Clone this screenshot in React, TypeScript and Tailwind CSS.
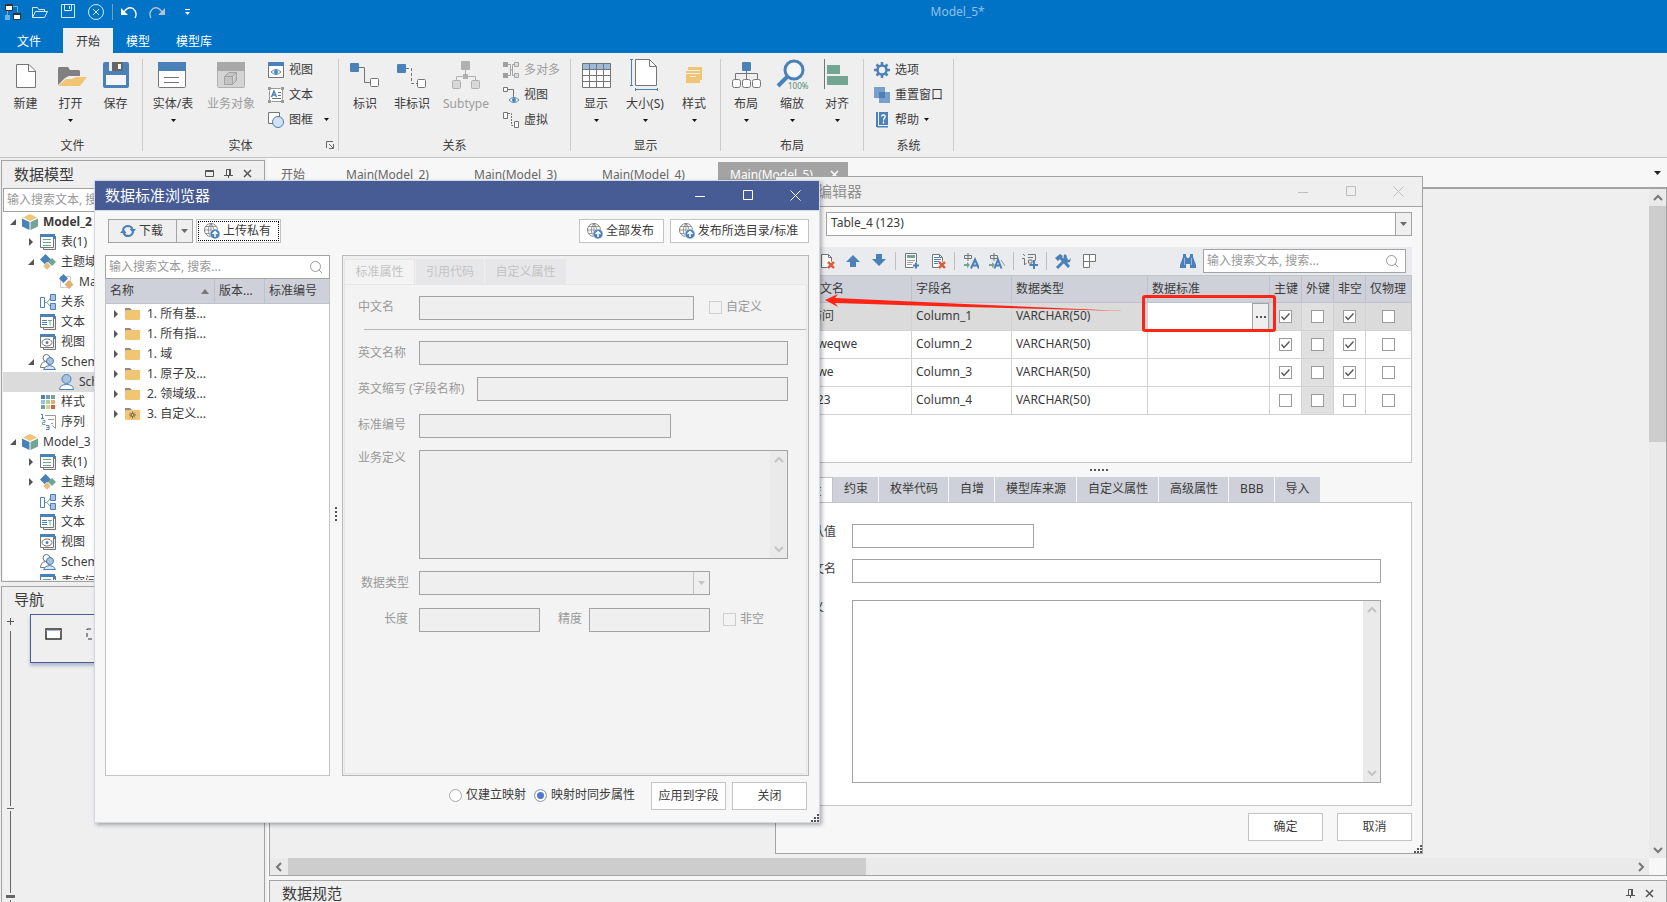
import type { ReactNode } from 'react';

const BLUE = '#4a81b9';
const GREEN = '#72a592';
const YELLOW = '#f0c573';
const GRAY = '#757575';

// ─── Icons ────────────────────────────────────────────────────────────────────

function Svg({ w = 16, h = 16, children }: { w?: number; h?: number; children: ReactNode }) {
  return (
    <svg width={w} height={h} viewBox={`0 0 ${w} ${h}`} fill="none" className="shrink-0" aria-hidden="true">
      {children}
    </svg>
  );
}

const DownArrow = () => (
  <Svg w={5} h={3}>
    <path d="M0 0h5L2.500 3z" fill="#111" />
  </Svg>
);

const Triangle = ({ color = '#6b6b6b' }: { color?: string }) => (
  <Svg w={7} h={4}>
    <path d="M0 0h7L3.500 4z" fill={color} />
  </Svg>
);

const bigIcons = {
  create: (
    <Svg w={32} h={32}>
      <path d="M6.500 5.500h12.500l6.500 6.500v16.500h-19z" fill="#fff" stroke={GRAY} />
      <path d="M18.500 5.500v7h7" stroke={GRAY} />
    </Svg>
  ),
  open: (
    <Svg w={32} h={32}>
      <path d="M3 9l1-1h9l2 3h9l1 1v5H14l-4 2-7 7z" fill="#808080" />
      <path d="M3 27l8-7h6l4-2h11l-7 9z" fill={YELLOW} />
    </Svg>
  ),
  save: (
    <Svg w={32} h={32}>
      <rect x="3" y="3" width="26" height="26" rx="2" fill={BLUE} />
      <path d="M9 3h14v9H9z" fill="#efefef" />
      <path d="M12 3h11v9H12z" fill="#666" />
      <path d="M18 5h3v5h-3zM6 16h20v10H6z" fill="#f5f5f5" />
    </Svg>
  ),
  entity: (
    <Svg w={32} h={32}>
      <rect x="1.500" y="3.500" width="27" height="25" rx="1" fill="#fff" stroke={GRAY} />
      <path d="M1 3h28v9H1z" fill={BLUE} />
      <path d="M7 18.500h15M7 23.500h15" stroke={GRAY} />
    </Svg>
  ),
  business: (
    <Svg w={32} h={32}>
      <rect x="2.500" y="3.500" width="27" height="25" rx="1" fill="#d4d4d4" stroke="#b0b0b0" />
      <path d="M2 3h28v9H2z" fill="#a8a8a8" />
      <path d="M9.500 17.500h8v8h-8zM9.500 17.500l4-4h8l-4 4M21.500 13.500v8l-4 4" fill="#c4c4c4" stroke="#a3a3a3" />
    </Svg>
  ),
  identify: (
    <Svg w={32} h={32}>
      <path d="M10 8.500h5.500v15H21" stroke={GRAY} />
      <rect x="1" y="4" width="9" height="9" rx="1" fill={BLUE} />
      <rect x="21.500" y="19.500" width="8" height="8" rx="1" fill="#fff" stroke={GRAY} />
    </Svg>
  ),
  nonIdentify: (
    <Svg w={32} h={32}>
      <path d="M10 9.500h5.500v15H21" stroke={GRAY} strokeDasharray="3 2" />
      <rect x="1" y="5" width="9" height="9" rx="1" fill={BLUE} />
      <rect x="21.500" y="20.500" width="8" height="8" rx="1" fill="#fff" stroke={GRAY} />
    </Svg>
  ),
  subtype: (
    <Svg w={32} h={32}>
      <path d="M15.500 10v8M6.500 21v-3.500h19V21" stroke="#b0b0b0" />
      <rect x="11" y="2" width="9" height="9" rx="1" fill="#b0b0b0" />
      <path d="M13 15h5v5h-5z" fill="#b0b0b0" />
      <rect x="2.500" y="21.500" width="8" height="8" rx="1" fill="#d8d8d8" stroke="#b0b0b0" />
      <rect x="21.500" y="21.500" width="8" height="8" rx="1" fill="#d8d8d8" stroke="#b0b0b0" />
    </Svg>
  ),
  display: (
    <Svg w={32} h={32}>
      <path d="M2 4h29v25H2z" fill="#fff" />
      <path d="M2 4h29v7H2z" fill="#9fb9d9" />
      <path d="M2.500 4.500h28v24h-28zM9.500 4.500v24M16.500 4.500v24M23.500 4.500v24M2.500 10.500h28M2.500 16.500h28M2.500 22.500h28" stroke={GRAY} />
    </Svg>
  ),
  size: (
    <Svg w={32} h={32}>
      <path d="M2.500.5v26M1 .5h3M1 26.500h3M6.500 30.500h22M6.500 29v3M28.500 29v3" stroke={BLUE} />
      <path d="M6.500.5h14l7 7v19h-21z" fill="#fff" stroke={GRAY} />
      <path d="M20.500.5v7h7" stroke={GRAY} />
    </Svg>
  ),
  style: (
    <Svg w={32} h={32}>
      <path d="M10 8h14v13h-2V11H10z" fill={YELLOW} />
      <path d="M8 12h14v2H8zM8 15h14v9H8z" fill={YELLOW} />
      <path d="M12.500 17.500h5" stroke="#fff" />
    </Svg>
  ),
  layout: (
    <Svg w={32} h={32}>
      <path d="M16.500 12v8M5.500 20v-5.500h22V20" stroke={GRAY} />
      <rect x="12" y="3" width="9" height="9" rx="1" fill={BLUE} />
      <rect x="2.500" y="20.500" width="8" height="8" rx="2" fill="#fff" stroke={GRAY} />
      <rect x="12.500" y="20.500" width="8" height="8" rx="2" fill="#fff" stroke={GRAY} />
      <rect x="22.500" y="20.500" width="8" height="8" rx="2" fill="#fff" stroke={GRAY} />
    </Svg>
  ),
  zoom: (
    <Svg w={34} h={32}>
      <circle cx="19" cy="11" r="9" fill="#f4f6f8" stroke={BLUE} strokeWidth="3" />
      <path d="M13 17L3 27" stroke={BLUE} strokeWidth="4" />
      <text x="13" y="30" fontSize="8" fill="#4f8a73">100%</text>
    </Svg>
  ),
  align: (
    <Svg w={32} h={32}>
      <path d="M3.500 0v30" stroke={GRAY} />
      <path d="M6 6h13v9H6zM6 17h21v9H6z" fill={GREEN} />
    </Svg>
  ),
};

const Eye = () => (
  <g>
    <path d="M3 10q5-5 10 0q-5 5-10 0z" fill="#fff" stroke={BLUE} />
    <circle cx="8" cy="10" r="2" fill={BLUE} />
  </g>
);

const ListCard = ({ children }: { children: ReactNode }) => (
  <Svg>
    <path d="M3.500 4.500h12v11h-12z" fill="#efefef" stroke={GRAY} />
    <path d="M.5 2.500h13v11H.5z" fill="#fff" stroke={GRAY} />
    <path d="M0 0h15v3H0zM14 2h2v3h-2z" fill={BLUE} />
    {children}
  </Svg>
);

const GlobeUp = () => (
  <Svg>
    <circle cx="7" cy="7" r="6.500" stroke="#808080" />
    <path d="M.5 7h13M7 .5v13M2 3.500h10M2 10.500h8M7 .5Q1.500 7 7 13.500M7 .5Q12.500 7 7 13.500" stroke="#808080" strokeWidth=".8" />
    <circle cx="11" cy="11" r="5" fill={BLUE} stroke="#fff" strokeWidth=".6" />
    <path d="M11 14V9M8.500 11L11 8.500l2.500 2.500" stroke="#fff" strokeWidth="1.500" />
  </Svg>
);

const RedX = ({ children }: { children?: ReactNode }) => (
  <Svg>
    <path d="M2.500 1.500h7l3 3v10h-10z" fill="#fff" stroke={GRAY} />
    <path d="M9.500 1.500v3h3" stroke={GRAY} />
    {children}
    <path d="M9 9l6 6M15 9l-6 6" stroke="#fff" strokeWidth="4" />
    <path d="M9 9l6 6M15 9l-6 6" stroke="#d9603f" strokeWidth="2.500" />
  </Svg>
);

const smallIcons = {
  view: (
    <Svg>
      <path d="M.5.5h15v15H.5z" fill="#fff" stroke={GRAY} />
      <path d="M0 0h16v4H0z" fill={BLUE} />
      <Eye />
    </Svg>
  ),
  text: (
    <Svg>
      <path d="M1.500 1.500h13v13h-13z" fill="#fff" stroke="#999" strokeDasharray="11 2" />
      <path d="M0 0h3v3H0zM13 0h3v3h-3zM0 13h3v3H0zM13 13h3v3h-3z" fill="#999" />
      <path d="M3.500 10L6 4l2.500 6M4.500 8h3" stroke={BLUE} strokeWidth="1.400" />
      <path d="M10 5.500h3M10 8.500h3M4 11.500h9" stroke={GRAY} />
    </Svg>
  ),
  frame: (
    <Svg>
      <path d="M.5.5h11v11H.5z" fill="#fff" stroke={GRAY} />
      <circle cx="10" cy="10" r="5.500" fill="#d5e1ef" stroke={BLUE} />
    </Svg>
  ),
  many: (
    <Svg>
      <path d="M4 2.500h3.500v11H4M12 2.500H9.500v11H12M7.500 8h2" stroke="#a5a5a5" />
      <path d="M0 0h5v5H0zM0 11h5v5H0z" fill="#a0a0a0" />
      <path d="M11.500.5h4v4h-4zM11.500 11.500h4v4h-4z" fill="#ddd" stroke="#a5a5a5" />
    </Svg>
  ),
  relView: (
    <Svg>
      <path d="M4 2.500h6.500V10" stroke={GRAY} />
      <path d="M.5.500h4v4h-4z" fill="#fff" stroke={GRAY} />
      <path d="M6 13q5-5 10 0q-5 5-10 0z" fill="#fff" stroke={BLUE} />
      <circle cx="11" cy="13" r="2" fill={BLUE} />
    </Svg>
  ),
  virtual: (
    <Svg>
      <path d="M5 1.500h3.500v12H11" stroke={GRAY} strokeDasharray="2 1" />
      <path d="M.5.500h4v6h-4zM11.500 9.500h4v6h-4z" fill="#fff" stroke={GRAY} />
    </Svg>
  ),
  gear: (
    <Svg>
      <circle cx="8" cy="8" r="4.500" stroke={BLUE} strokeWidth="2.500" />
      <path d="M8 0v3M8 13v3M0 8h3M13 8h3M2.500 2.500l2 2M11.500 11.500l2 2M13.500 2.500l-2 2M4.500 11.500l-2 2" stroke={BLUE} strokeWidth="2.500" />
    </Svg>
  ),
  windows: (
    <Svg>
      <path d="M0 0h11v11H0z" fill="#7a9fca" />
      <path d="M5 5h11v11H5z" fill="#7a9fca" />
      <path d="M5 5h6v6H5z" fill={BLUE} />
    </Svg>
  ),
  help: (
    <Svg>
      <path d="M2 0h2v15H2zM5 0h9v13H5zM3 14h11v1.500H3z" fill={BLUE} />
      <path d="M7.500 4.500Q8 2.500 10 3q2 1 .5 3Q9.500 7 9.500 8.500M9.500 9.500v2" stroke="#fff" strokeWidth="1.400" />
    </Svg>
  ),
};

const treeIcons = {
  model: (
    <Svg>
      <path d="M8 0l7 3.500L8 7 1 3.500z" fill={YELLOW} />
      <path d="M0 4.500l7.500 3.500v8L0 12.500z" fill={BLUE} />
      <path d="M16 4.500L8.500 8v8l7.500-3.500z" fill={GREEN} />
    </Svg>
  ),
  table: (
    <ListCard>
      <path d="M3 5.500h8M3 8.500h8M3 11.500h8" stroke={GREEN} />
    </ListCard>
  ),
  subject: (
    <Svg>
      <path d="M5.500 0L11 5.500 5.500 11 0 5.500z" fill={BLUE} />
      <path d="M12 4l4 4-4 4-4-4z" fill={GREEN} />
      <path d="M7 8l4 4-4 4-4-4z" fill="#e6bd80" stroke="#fff" strokeWidth=".5" />
    </Svg>
  ),
  main: (
    <Svg>
      <path d="M1.500 2.500h10v11h-10z" fill="#fff" stroke="#ccc" />
      <path d="M4.500 0L9 4.500 4.500 9 0 4.500z" fill={BLUE} />
      <path d="M10 6l4.500 4.500L10 15l-4.500-4.500z" fill="#e0b070" />
    </Svg>
  ),
  relation: (
    <Svg>
      <path d="M.5 3.500h4v10h-4z" fill="#fff" stroke={BLUE} />
      <path d="M5 8.500h2l4-5M7 8.500l4 5" stroke={GREEN} />
      <path d="M10.500.5h5v6h-5zM10.500 9.500h5v6h-5z" fill="#a9c2df" stroke={BLUE} />
    </Svg>
  ),
  text: (
    <ListCard>
      <path d="M2 6.500h5M2 8.500h5M2 10.500h5" stroke={BLUE} />
      <path d="M8 6.500h4M10 6.500v5" stroke={GREEN} />
    </ListCard>
  ),
  view: (
    <ListCard>
      <ellipse cx="7" cy="8.500" rx="5" ry="3.500" stroke={GRAY} />
      <circle cx="7" cy="8.500" r="1.500" fill={BLUE} />
    </ListCard>
  ),
  users: (
    <Svg>
      <circle cx="6.500" cy="4" r="3.500" fill="#fff" stroke={GRAY} />
      <path d="M.5 13.500q0-5 5-6l6 6z" fill="#fff" stroke={GRAY} />
      <circle cx="10" cy="7" r="3.500" fill="#a9c2df" stroke={BLUE} />
      <path d="M3.500 15.500Q5 11.500 9.500 11.500T15.500 15.500z" fill="#dce6f2" stroke={BLUE} />
    </Svg>
  ),
  user: (
    <Svg>
      <circle cx="7.500" cy="5" r="4.500" fill="#a9c2df" stroke={BLUE} />
      <path d="M.5 15.500Q1 10.500 7.500 10.500T14.500 15.500z" fill="#fff" stroke={BLUE} />
    </Svg>
  ),
  style: (
    <Svg>
      <path d="M1 1h4v4H1z" fill={BLUE} />
      <path d="M6 1h4v4H6z" fill="#6f9fae" />
      <path d="M11 1h4v4h-4z" fill={GREEN} />
      <path d="M1 6h4v4H1z" fill="#9bc0dc" />
      <path d="M6 6h4v4H6z" fill="#b2cba0" />
      <path d="M11 6h4v4h-4z" fill="#e6b070" />
      <path d="M1 11h4v4H1z" fill="#72a5a0" />
      <path d="M6 11h4v4H6z" fill="#e2cd8c" />
      <path d="M11 11h4v4h-4z" fill="#d9603f" />
    </Svg>
  ),
  sequence: (
    <Svg>
      <path d="M5 1.500h10.500v13l-3-3M8 5.500h6M11 9.500h2" stroke="#999" />
      <path d="M1 .5h1.500V5M1 4.500h3M6 11.500h3v4H6M6.500 13.500H9" stroke={BLUE} />
      <path d="M2.500 6.500h2.500v2H2.500v2H5.500" stroke={GREEN} />
    </Svg>
  ),
};

const toolIcons = {
  remove: <RedX />,
  up: (
    <Svg><path d="M8 2l7 7h-4v5H5V9H1z" fill={BLUE} /></Svg>
  ),
  down: (
    <Svg><path d="M8 13L1 6h4V1h6v5h4z" fill={BLUE} /></Svg>
  ),
  rowAdd: (
    <Svg>
      <path d="M1.500.500h11v14h-11z" fill="#fff" stroke={GRAY} />
      <path d="M3 2h8v3H3z" fill={GREEN} />
      <path d="M3 7.500h8M3 9.500h6M3 11.500h5" stroke="#a0a0a0" />
      <path d="M12 9v7M9 12.500h7" stroke="#eaebef" strokeWidth="4" />
      <path d="M12 9.500v6M9 12.500h6" stroke={BLUE} strokeWidth="2" />
    </Svg>
  ),
  rowDelete: (
    <RedX>
      <path d="M4 4.500h5M4 6.500h7M4 8.500h6M4 10.500h4" stroke={BLUE} />
    </RedX>
  ),
  translate: (
    <Svg>
      <path d="M1.500 2.500h7v3h-7zM5 0v8" stroke={GRAY} />
      <path d="M1 11h3V9l3 3-3 3v-2H1z" fill={GREEN} />
      <path d="M8 15.500l4-9 4 9M9.500 12.500h5" stroke={BLUE} strokeWidth="2" />
    </Svg>
  ),
  translateAll: (
    <Svg>
      <path d="M1.500 2.500h7v3h-7zM5 0v8" stroke={GRAY} />
      <path d="M0 11h3V9l3 3-3 3v-2H0z" fill={GREEN} />
      <path d="M12 7l4 6" stroke="#999" />
      <path d="M5.500 15.500l3.500-9 3.500 9M7 12.500h4.500" stroke={BLUE} strokeWidth="2" />
    </Svg>
  ),
  word: (
    <Svg>
      <path d="M1 1l2 2M0 5.500h2.500V12l2-2M6 1.500h7.500v6M6 4.500h5M6.500 7h3.500v3H6.500z" stroke={GRAY} />
      <path d="M12 7v9M7.500 12h8.500" stroke={BLUE} strokeWidth="2" />
    </Svg>
  ),
  tools: (
    <Svg>
      <path d="M2 15L12 5" stroke={BLUE} strokeWidth="3" />
      <path d="M4 3l10 11" stroke={BLUE} strokeWidth="3" />
      <path d="M0 5l5-4 3 2-5 5zM10 1l2 2-1 3 3 1 2-2-1 4-4 1-3-3 1-5z" fill={BLUE} />
    </Svg>
  ),
  grid: (
    <Svg>
      <path d="M2.500 1.500h12v7h-6v6h-6zM8.500 1.500v7h-6" fill="#fff" stroke={GRAY} />
    </Svg>
  ),
};

const Binoculars = () => (
  <Svg>
    <path d="M3 1h3v2l1 2h2l1-2V1h3v3l3 8v3h-6v-4H6v4H0v-3l3-8z" fill={BLUE} />
    <path d="M4.500 5v7M11.500 5v7" stroke="#9fb9d9" />
  </Svg>
);

const SearchIcon = () => (
  <Svg w={12} h={12}>
    <circle cx="5.500" cy="5.500" r="5" stroke="#999" />
    <path d="M9 9l3 3" stroke="#999" />
  </Svg>
);

const Folder = ({ custom = false }: { custom?: boolean }) => (
  <Svg>
    <path d="M0 3V2h5l2 2v1H0z" fill="#8a8a8a" />
    <path d="M0 5l1-1h14v9l-1 1H1l-1-1z" fill={YELLOW} />
    {custom && (
      <>
        <path d="M7.500 5.500v7M4 9h7M5 6.500l5 5M10 6.500l-5 5" stroke="#555" strokeWidth=".8" />
        <circle cx="7.500" cy="9" r="1.500" fill={YELLOW} stroke="#555" strokeWidth=".8" />
      </>
    )}
  </Svg>
);

const Chevron = ({ dir, color = '#777' }: { dir: 'up' | 'down' | 'left' | 'right'; color?: string }) => {
  const paths = { up: 'M1 7l4-4 4 4', down: 'M1 3l4 4 4-4', left: 'M7 1L3 5l4 4', right: 'M3 1l4 4-4 4' };
  return (
    <Svg w={10} h={10}>
      <path d={paths[dir]} stroke={color} strokeWidth="2" />
    </Svg>
  );
};

const PinIcon = () => (
  <Svg w={9} h={9}>
    <path d="M2.500 6V.5h4V6M0 6.500h9M4.500 6.500V9" stroke="#555" />
    <path d="M5 0h2v6H5z" fill="#555" />
  </Svg>
);

const CrossIcon = ({ color = '#555' }: { color?: string }) => (
  <Svg w={9} h={9}>
    <path d="M1 1l7 7M8 1L1 8" stroke={color} strokeWidth="1.500" />
  </Svg>
);

const Grip = () => (
  <div className="absolute bottom-0 right-0">
    <Svg w={8} h={8}>
      <path d="M6 0h2v2H6zM3 3h2v2H3zM6 3h2v2H6zM0 6h2v2H0zM3 6h2v2H3zM6 6h2v2H6z" fill="#555" />
    </Svg>
  </div>
);

function WindowButtons({ color }: { color: string }) {
  return (
    <div className="flex pb-px">
      <button aria-label="最小化" className="flex h-7 w-12 items-center justify-center">
        <Svg w={11} h={11}><path d="M1 6.500h10" stroke={color} /></Svg>
      </button>
      <button aria-label="最大化" className="flex h-7 w-12 items-center justify-center">
        <Svg w={11} h={11}><path d="M1.500.5h9v9h-9z" stroke={color} /></Svg>
      </button>
      <button aria-label="关闭窗口" className="flex h-7 w-12 items-center justify-center">
        <Svg w={11} h={11}><path d="M.5.500l10 10M10.500.500l-10 10" stroke={color} /></Svg>
      </button>
    </div>
  );
}

// ─── Ribbon ───────────────────────────────────────────────────────────────────

function TitleBar() {
  return (
    <header className="relative flex h-7 shrink-0 items-center bg-[#0173c7] pl-[5px] pb-1">
      <Svg w={16} h={16}>
        <path d="M8 2.500h4.500V8M2.500 6v6.500" stroke="#6db3ea" />
        <path d="M.5.500h7v6h-7zM8.500 9.500h7v6h-7z" fill="#fff" stroke="#333" />
        <path d="M0 0h8v2H0zM8 9h8v2H8z" fill="#333" />
        <path d="M0 11h5v5H0z" fill="#6db3ea" />
      </Svg>
      <button aria-label="打开" className="ml-[11px]">
        <Svg w={16} h={16}>
          <path d="M.5 13.500V3.500h5l1 2h6v2M.5 13.500l3-6h12l-3 6z" stroke="#d5e8f7" />
        </Svg>
      </button>
      <button aria-label="保存" className="ml-[13px]">
        <Svg w={16} h={16}>
          <path d="M.5.5h13v13H.5zM3.500.5v6h7v-6M8.500 2v3" stroke="#d5e8f7" />
        </Svg>
      </button>
      <button aria-label="关闭模型" className="ml-[11px]">
        <Svg w={16} h={16}>
          <circle cx="8" cy="8" r="7.500" stroke="#d5e8f7" />
          <path d="M5 5l6 6M11 5l-6 6" stroke="#d5e8f7" />
        </Svg>
      </button>
      <span className="ml-2 h-4 w-px bg-[#8a9aa8]" />
      <button aria-label="撤销" className="ml-2">
        <Svg w={16} h={16}>
          <path d="M0 4v7h7z" fill="#fff" />
          <path d="M3 8Q7 2 12 4.500q5 4 2 9.500" stroke="#fff" strokeWidth="1.300" />
        </Svg>
      </button>
      <button aria-label="重做" className="ml-3">
        <Svg w={16} h={16}>
          <path d="M16 4v7H9z" fill="#b8c2cc" />
          <path d="M13 8Q9 2 4 4.500q-5 4-2 9.500" stroke="#b8c2cc" strokeWidth="1.300" />
        </Svg>
      </button>
      <button aria-label="自定义快速访问工具栏" className="ml-[19px]">
        <Svg w={7} h={7}>
          <path d="M1 .5h5" stroke="#fff" />
          <path d="M1 3h5L3.500 6z" fill="#fff" />
        </Svg>
      </button>
      <h1 className="absolute left-1/2 ml-[97px] text-[#8fc1e8]">Model_5*</h1>
    </header>
  );
}

function BigButton({ icon, label, width, arrow, disabled }: {
  icon: ReactNode; label: string; width: string; arrow?: boolean; disabled?: boolean;
}) {
  return (
    <button
      disabled={disabled}
      className={`flex flex-col items-center whitespace-nowrap ${width} ${disabled ? 'text-[#9d9d9d]' : ''}`}
    >
      {icon}
      <span className="mt-1 leading-[18px]">{label}</span>
      {arrow && <span className="mt-[6px]"><DownArrow /></span>}
    </button>
  );
}

function SmallButton({ icon, label, disabled, arrow }: {
  icon: ReactNode; label: string; disabled?: boolean; arrow?: boolean;
}) {
  return (
    <button
      disabled={disabled}
      className={`flex h-[25px] items-center gap-[5px] whitespace-nowrap ${disabled ? 'text-[#9d9d9d]' : ''}`}
    >
      {icon}
      <span>{label}</span>
      {arrow && <DownArrow />}
    </button>
  );
}

function RibbonGroup({ title, width, corner, children }: {
  title: string; width: string; corner?: boolean; children: ReactNode;
}) {
  return (
    <section className={`relative flex h-[92px] shrink-0 flex-col justify-between border-r border-[#cbcbcb] ${width}`}>
      <div className="flex h-[76px] items-start">{children}</div>
      <h2 className="text-center leading-[10px]">{title}</h2>
      {corner && (
        <button aria-label="实体选项" className="absolute bottom-0.5 right-1">
          <Svg w={8} h={8}>
            <path d="M.5 7V.5H7M3 3l4 4M7.500 3v4.500H3" stroke="#666" />
          </Svg>
        </button>
      )}
    </section>
  );
}

function Ribbon() {
  return (
    <>
      <nav className="flex h-[25px] shrink-0 bg-[#0173c7] text-white">
        <a href="#file" className="w-[63px] pl-[17px] leading-[28px]">文件</a>
        <a href="#home" className="bg-[#efefef] px-[13px] leading-[28px] text-[#333]">开始</a>
        <a href="#model" className="px-[13px] leading-[28px]">模型</a>
        <a href="#library" className="px-[13px] leading-[28px]">模型库</a>
      </nav>
      <div className="flex h-[105px] shrink-0 border-b border-[#c4c4c4] bg-[#efefef] pt-1.5">
        <RibbonGroup title="文件" width="w-[143px] pl-[3px]">
          <BigButton icon={bigIcons.create} label="新建" width="w-[45px]" />
          <BigButton icon={bigIcons.open} label="打开" width="w-[45px]" arrow />
          <BigButton icon={bigIcons.save} label="保存" width="w-[45px]" />
        </RibbonGroup>
        <RibbonGroup title="实体" width="w-[196px]" corner>
          <BigButton icon={bigIcons.entity} label="实体/表" width="w-[60px]" arrow />
          <BigButton icon={bigIcons.business} label="业务对象" width="w-[56px]" disabled />
          <div className="-mt-0.5 flex flex-col pl-[9px]">
            <SmallButton icon={smallIcons.view} label="视图" />
            <SmallButton icon={smallIcons.text} label="文本" />
            <div className="flex items-center gap-[11px]">
              <SmallButton icon={smallIcons.frame} label="图框" />
              <button aria-label="图框选项"><DownArrow /></button>
            </div>
          </div>
        </RibbonGroup>
        <RibbonGroup title="关系" width="w-[232px]">
          <BigButton icon={bigIcons.identify} label="标识" width="w-[52px]" />
          <BigButton icon={bigIcons.nonIdentify} label="非标识" width="w-[42px]" />
          <BigButton icon={bigIcons.subtype} label="Subtype" width="w-[66px]" disabled />
          <div className="-mt-0.5 flex flex-col pl-1">
            <SmallButton icon={smallIcons.many} label="多对多" disabled />
            <SmallButton icon={smallIcons.relView} label="视图" />
            <SmallButton icon={smallIcons.virtual} label="虚拟" />
          </div>
        </RibbonGroup>
        <RibbonGroup title="显示" width="w-[150px]">
          <BigButton icon={bigIcons.display} label="显示" width="w-[50px]" arrow />
          <BigButton icon={bigIcons.size} label="大小(S)" width="w-[48px]" arrow />
          <BigButton icon={bigIcons.style} label="样式" width="w-[50px]" arrow />
        </RibbonGroup>
        <RibbonGroup title="布局" width="w-[143px]">
          <BigButton icon={bigIcons.layout} label="布局" width="w-[50px]" arrow />
          <BigButton icon={bigIcons.zoom} label="缩放" width="w-[42px]" arrow />
          <BigButton icon={bigIcons.align} label="对齐" width="w-[48px]" arrow />
        </RibbonGroup>
        <RibbonGroup title="系统" width="w-[90px]">
          <div className="-mt-0.5 flex flex-col pl-[10px]">
            <SmallButton icon={smallIcons.gear} label="选项" />
            <SmallButton icon={smallIcons.windows} label="重置窗口" />
            <SmallButton icon={smallIcons.help} label="帮助" arrow />
          </div>
        </RibbonGroup>
      </div>
    </>
  );
}

// ─── Left side: model tree and navigation ─────────────────────────────────────

interface TreeRow {
  level: 0 | 1 | 2;
  icon: keyof typeof treeIcons;
  label: string;
  open?: boolean;
  bold?: boolean;
  selected?: boolean;
}

const TREE: TreeRow[] = [
  { level: 0, icon: 'model', label: 'Model_2', open: true, bold: true },
  { level: 1, icon: 'table', label: '表(1)', open: false },
  { level: 1, icon: 'subject', label: '主题域', open: true },
  { level: 2, icon: 'main', label: 'Main' },
  { level: 1, icon: 'relation', label: '关系' },
  { level: 1, icon: 'text', label: '文本' },
  { level: 1, icon: 'view', label: '视图' },
  { level: 1, icon: 'users', label: 'Schema', open: true },
  { level: 2, icon: 'user', label: 'Schema', selected: true },
  { level: 1, icon: 'style', label: '样式' },
  { level: 1, icon: 'sequence', label: '序列' },
  { level: 0, icon: 'model', label: 'Model_3', open: true },
  { level: 1, icon: 'table', label: '表(1)', open: false },
  { level: 1, icon: 'subject', label: '主题域', open: false },
  { level: 1, icon: 'relation', label: '关系' },
  { level: 1, icon: 'text', label: '文本' },
  { level: 1, icon: 'view', label: '视图' },
  { level: 1, icon: 'users', label: 'Schema' },
  { level: 1, icon: 'table', label: '表空间' },
];

const INDENT = ['pl-[7px]', 'pl-[25px]', 'pl-[44px]'];

function Expander({ open }: { open?: boolean }) {
  return (
    <span className="flex w-3 shrink-0 items-center">
      {open === true && <Svg w={6} h={6}><path d="M6 0v6H0z" fill="#555" /></Svg>}
      {open === false && <Svg w={6} h={8}><path d="M1 0l4 4-4 4z" fill="#555" /></Svg>}
    </span>
  );
}

function ModelPanel() {
  return (
    <section className="flex h-[422px] shrink-0 flex-col border border-[#a3a3a3] bg-[#efefef] px-px pb-px">
      <div className="flex h-[27px] items-center pb-0.5 pl-[11px] pr-[11px]">
        <h2 className="flex-1 text-[15px]">数据模型</h2>
        <div className="flex items-center gap-[10px]">
          <button aria-label="窗口"><Svg w={9} h={8}><path d="M.5.5h8v6h-8zM.5 1.500h8" stroke="#555" /></Svg></button>
          <button aria-label="固定"><PinIcon /></button>
          <button aria-label="关闭"><CrossIcon /></button>
        </div>
      </div>
      <input
        aria-label="搜索模型"
        placeholder="输入搜索文本, 搜索..."
        className="h-6 shrink-0 border border-[#a3a3a3] bg-white pb-0.5 pl-[3px] placeholder:text-[#999]"
      />
      <ul className="min-h-0 flex-1 overflow-hidden bg-white">
        {TREE.map((row, i) => (
          <li
            key={i}
            className={`flex h-5 items-center ${INDENT[row.level]} ${row.selected ? 'bg-[#dbdbdb]' : ''}`}
          >
            <Expander open={row.open} />
            {treeIcons[row.icon]}
            <span className={`${row.level === 2 ? 'ml-1' : 'ml-[5px]'} ${row.bold ? 'font-bold' : ''}`}>{row.label}</span>
          </li>
        ))}
      </ul>
    </section>
  );
}

function NavPanel() {
  return (
    <section className="mt-1 flex min-h-0 flex-1 flex-col border border-b-0 border-[#a3a3a3] bg-[#efefef]">
      <h2 className="h-[27px] pl-3 text-[15px] leading-[24px]">导航</h2>
      <div className="flex min-h-0 flex-1">
        <div className="flex w-4 flex-col items-center pt-1 text-[#555]">
          <Svg w={9} h={7}><path d="M4.500 0v7M1 3.500h7" stroke="#555" /></Svg>
          <span className="mt-1.5 w-px flex-1 bg-[#666]" />
          <span className="my-0.5 h-px w-[7px] bg-[#666]" />
          <span className="h-[82px] w-px bg-[#666]" />
          <span className="my-0.5 h-[3px] w-[9px] shrink-0 bg-[#666]" />
          <span className="h-0.5 w-px bg-[#666]" />
        </div>
        <div className="ml-3 h-[49px] flex-1 border border-[#4a5d94] shadow-[0_3px_3px_rgba(90,110,160,0.4)]">
          <div className="flex gap-6 pl-[14px] pt-[13px]">
            <Svg w={17} h={12}>
              <path d="M1 1h15v10H1z" fill="#fff" stroke="#333" strokeWidth="1.500" />
              <path d="M1 2.500h15" stroke="#9fb9d9" />
            </Svg>
            <Svg w={17} h={12}>
              <path d="M1 1h15v10H1z" stroke="#333" strokeDasharray="4 3" />
            </Svg>
          </div>
        </div>
      </div>
    </section>
  );
}

// ─── Document area ────────────────────────────────────────────────────────────

function DocumentArea() {
  return (
    <main className="flex min-w-0 flex-1 flex-col bg-[#f7f7f7] pl-0.5">
      <div className="flex h-[29px] shrink-0 items-end text-[#666]">
        <a href="#start" className="h-[25px] w-[65px] pl-3 leading-[26px]">开始</a>
        <a href="#m2" className="h-[25px] w-[128px] pl-3 leading-[26px]">Main(Model_2)</a>
        <a href="#m3" className="h-[25px] w-[128px] pl-3 leading-[26px]">Main(Model_3)</a>
        <a href="#m4" className="h-[25px] w-[128px] pl-3 leading-[26px]">Main(Model_4)</a>
        <div className="flex h-[25px] w-[130px] items-center justify-between bg-[#a3a3a3] pl-3 pr-[9px] text-white">
          <a href="#m5">Main(Model_5)</a>
          <button aria-label="关闭标签"><CrossIcon color="#fff" /></button>
        </div>
        <button aria-label="标签列表" className="mb-3 ml-auto mr-[6px]"><Triangle color="#222" /></button>
      </div>
      <div className="flex min-h-0 flex-1 flex-col border border-t-2 border-[#a3a3a3] bg-[#efefef]">
        <div className="flex min-h-0 flex-1 justify-end">
          <div className="flex w-[17px] flex-col items-center bg-[#eaeaea]">
            <span className="flex h-[17px] items-center"><Chevron dir="up" /></span>
            <span className="h-[236px] w-full bg-[#cdcdcd]" />
            <span className="mt-auto flex h-[17px] items-center"><Chevron dir="down" /></span>
          </div>
        </div>
        <div className="flex h-[17px] shrink-0">
          <div className="flex flex-1 bg-[#eaeaea]">
            <span className="flex w-[18px] items-center justify-center"><Chevron dir="left" /></span>
            <span className="w-[578px] bg-[#cdcdcd]" />
            <span className="ml-auto flex w-[17px] items-center justify-center"><Chevron dir="right" /></span>
          </div>
          <span className="w-[17px] bg-[#f7f7f7]" />
        </div>
      </div>
      <div className="mt-1 flex h-[22px] shrink-0 items-center border border-b-0 border-[#a3a3a3] bg-[#efefef] pl-3 pr-3 pt-0.5">
        <h2 className="flex-1 text-[15px] leading-5">数据规范</h2>
        <div className="flex items-center gap-[10px] pt-0.5">
          <button aria-label="固定面板"><PinIcon /></button>
          <button aria-label="关闭面板"><CrossIcon /></button>
        </div>
      </div>
    </main>
  );
}

// ─── Shared form parts ────────────────────────────────────────────────────────

function CheckBox({ label, checked, disabled, id }: {
  label?: string; checked?: boolean; disabled?: boolean; id?: string;
}) {
  return (
    <span className="relative inline-block size-[13px]">
      <input
        type="checkbox"
        id={id}
        aria-label={label}
        defaultChecked={checked}
        disabled={disabled}
        className="peer block size-[13px] appearance-none border border-[#9b9b9b] bg-white disabled:border-[#cfcfcf] disabled:bg-[#f3f3f3]"
      />
      <svg viewBox="0 0 13 13" className="pointer-events-none absolute inset-0 hidden peer-checked:block" fill="none">
        <path d="M2.500 6.500l2.500 3L10.500 3.500" stroke="#555" strokeWidth="1.400" />
      </svg>
    </span>
  );
}

function SearchBox({ label, className }: { label: string; className: string }) {
  return (
    <div className={`flex h-6 items-center border border-[#a3a3a3] bg-white pl-[3px] pr-[7px] ${className}`}>
      <input
        aria-label={label}
        placeholder="输入搜索文本, 搜索..."
        className="min-w-0 flex-1 outline-none placeholder:text-[#999]"
      />
      <SearchIcon />
    </div>
  );
}

// ─── Field editor window ──────────────────────────────────────────────────────

const FIELDS = [
  { cn: '访问', name: 'Column_1', pk: true, notNull: true },
  { cn: 'qweqwe', name: 'Column_2', pk: true, notNull: true },
  { cn: 'qwe', name: 'Column_3', pk: true, notNull: true },
  { cn: '123', name: 'Column_4', pk: false, notNull: false },
];

const EDITOR_TABS = ['约束', '枚举代码', '自增', '模型库来源', '自定义属性', '高级属性', 'BBB', '导入'];

const TH = 'border-b border-r border-[#bfc2ca] pl-1 text-left font-normal last:border-r-0';
const TD = 'border-b border-r border-[#d2d2d2] last:border-r-0';
const TD_TEXT = `${TD} pb-0.5`;

function ToolButton({ icon, label }: { icon: ReactNode; label: string }) {
  return (
    <button aria-label={label} className="flex w-[26px] items-center justify-center">{icon}</button>
  );
}

const ToolSep = () => <span className="mx-[3px] h-[18px] w-px bg-[#bfbfbf]" />;

function EditorToolbar() {
  return (
    <div className="flex h-7 shrink-0 items-center bg-[#eaebef] pl-0.5">
      <ToolButton icon={toolIcons.rowAdd} label="新增" />
      <ToolButton icon={toolIcons.remove} label="删除" />
      <ToolButton icon={toolIcons.up} label="上移" />
      <ToolButton icon={toolIcons.down} label="下移" />
      <ToolSep />
      <ToolButton icon={toolIcons.rowAdd} label="新增行" />
      <ToolButton icon={toolIcons.rowDelete} label="删除行" />
      <ToolSep />
      <ToolButton icon={toolIcons.translate} label="翻译" />
      <ToolButton icon={toolIcons.translateAll} label="全部翻译" />
      <ToolSep />
      <ToolButton icon={toolIcons.word} label="添加词" />
      <ToolSep />
      <ToolButton icon={toolIcons.tools} label="工具" />
      <ToolButton icon={toolIcons.grid} label="网格" />
      <div className="ml-auto flex items-center gap-[7px] pr-[6px]">
        <Binoculars />
        <SearchBox label="搜索字段" className="w-[203px]" />
      </div>
    </div>
  );
}

function FieldTable() {
  return (
    <div className="h-[188px] shrink-0 border border-[#c4c4c4] bg-white">
      <table className="w-full table-fixed border-separate border-spacing-0">
        <colgroup>
          <col className="w-[17px]" />
          <col className="w-[108px]" />
          <col className="w-[100px]" />
          <col className="w-[136px]" />
          <col className="w-[122px]" />
          <col className="w-8" />
          <col className="w-8" />
          <col className="w-8" />
          <col />
        </colgroup>
        <thead>
          <tr className="h-[27px] bg-[#ced1d9]">
            <th className={TH} />
            <th className={TH}>中文名</th>
            <th className={TH}>字段名</th>
            <th className={TH}>数据类型</th>
            <th className={TH}>数据标准</th>
            <th className={TH}>主键</th>
            <th className={TH}>外键</th>
            <th className={TH}>非空</th>
            <th className={TH}>仅物理</th>
          </tr>
        </thead>
        <tbody>
          {FIELDS.map((f, i) => (
            <tr key={f.name} className={`h-7 ${i === 0 ? 'bg-[#dbdbdb]' : ''}`}>
              <td className={TD} />
              <td className={`${TD_TEXT} pl-1.5`}>{f.cn}</td>
              <td className={`${TD_TEXT} pl-1`}>{f.name}</td>
              <td className={`${TD_TEXT} pl-1`}>VARCHAR(50)</td>
              <td className={TD}>
                {i === 0 && (
                  <div className="flex h-[27px]">
                    <input aria-label="数据标准" className="min-w-0 flex-1 bg-white outline-none" />
                    <button
                      aria-label="选择数据标准"
                      className="flex w-[17px] items-center justify-center border border-[#a3a3a3] bg-[#efefef]"
                    >
                      <Svg w={10} h={2}><path d="M0 0h2v2H0zM4 0h2v2H4zM8 0h2v2H8z" fill="#555" /></Svg>
                    </button>
                  </div>
                )}
              </td>
              <td className={`${TD} text-center leading-[0]`}><CheckBox label={`主键 ${f.name}`} checked={f.pk} /></td>
              <td className={`${TD} bg-[#e0e0e0] text-center leading-[0]`}><CheckBox label={`外键 ${f.name}`} /></td>
              <td className={`${TD} text-center leading-[0]`}><CheckBox label={`非空 ${f.name}`} checked={f.notNull} /></td>
              <td className={`${TD} text-center leading-[0]`}><CheckBox label={`仅物理 ${f.name}`} /></td>
            </tr>
          ))}
        </tbody>
      </table>
    </div>
  );
}

function EditorWindow() {
  return (
    <section className="absolute left-[775px] top-[176px] flex h-[678px] w-[648px] flex-col border border-[#a3a3a3] bg-[#f7f7f7]">
      <div className="flex h-[30px] shrink-0 items-center justify-between border-b border-[#a3a3a3] bg-[#efefef] pl-[11px]">
        <h2 className="pb-0.5 text-[15px] text-[#8f8f8f]">字段编辑器</h2>
        <WindowButtons color="#bdbdbd" />
      </div>
      <div className="flex flex-1 flex-col px-[10px] pt-[5px]">
        <div className="relative ml-10 h-6">
          <select
            aria-label="表"
            className="h-6 w-full appearance-none border border-[#a3a3a3] bg-white pb-0.5 pl-1 outline-none"
          >
            <option>Table_4 (123)</option>
          </select>
          <span className="pointer-events-none absolute right-0 top-0 flex h-6 w-[17px] items-center justify-center border border-[#a3a3a3] bg-[#efefef]">
            <Triangle />
          </span>
        </div>
        <div className="mt-[11px]"><EditorToolbar /></div>
        <FieldTable />
        <div className="flex h-[14px] shrink-0 items-center justify-center">
          <Svg w={18} h={2}>
            <path d="M0 0h2v2H0zM4 0h2v2H4zM8 0h2v2H8zM12 0h2v2h-2zM16 0h2v2h-2z" fill="#555" />
          </Svg>
        </div>
        <div className="flex h-[25px] shrink-0">
          <button className="h-[26px] w-[47px] border border-b-0 border-[#c4c4c4] bg-white">属性</button>
          {EDITOR_TABS.map((t) => (
            <button key={t} className="border-r border-[#f7f7f7] bg-[#ced1d9] pb-0.5 pl-[11px] pr-[10px]">{t}</button>
          ))}
        </div>
        <div className="flex h-[304px] shrink-0 flex-col border border-[#c4c4c4] bg-white pl-[13px] pr-[30px] pt-[21px]">
          <div className="flex">
            <label htmlFor="default-value" className="w-[52px] leading-4">默认值</label>
            <input id="default-value" className="h-6 w-[182px] border border-[#a3a3a3]" />
          </div>
          <div className="mt-[11px] flex">
            <label htmlFor="en-name" className="w-[52px] leading-5">英文名</label>
            <input id="en-name" className="h-6 flex-1 border border-[#a3a3a3]" />
          </div>
          <div className="mt-[17px] flex">
            <label htmlFor="definition" className="w-[52px]">定义</label>
            <div className="flex h-[183px] flex-1 border border-[#a3a3a3]">
              <textarea id="definition" className="flex-1 resize-none outline-none" />
              <div className="flex w-[17px] flex-col items-center justify-between bg-[#eaeaea] py-1">
                <Chevron dir="up" color="#c4c4c4" />
                <Chevron dir="down" color="#c4c4c4" />
              </div>
            </div>
          </div>
        </div>
        <div className="mt-[7px] flex justify-end gap-[14px]">
          <button className="h-7 w-[75px] border border-[#c4c4c4] bg-white">确定</button>
          <button className="h-7 w-[75px] border border-[#c4c4c4] bg-white">取消</button>
        </div>
      </div>
      <Grip />
    </section>
  );
}

// ─── Standard browser window ──────────────────────────────────────────────────

const STANDARDS = ['1. 所有基...', '1. 所有指...', '1. 域', '1. 原子及...', '2. 领域级...', '3. 自定义...'];

function StandardList() {
  return (
    <div className="flex w-[225px] shrink-0 flex-col">
      <SearchBox label="搜索标准" className="shrink-0" />
      <div className="flex-1 border border-t-0 border-[#c4c4c4] bg-white">
        <div className="flex h-[25px] border-b border-[#bfc2ca] bg-[#ced1d9] leading-[24px]">
          <div className="flex w-[109px] items-center justify-between border-r border-[#bfc2ca] pl-1 pr-[5px]">
            名称
            <Svg w={8} h={5}><path d="M0 5h8L4 0z" fill="#777" /></Svg>
          </div>
          <div className="w-[50px] border-r border-[#bfc2ca] pl-1">版本...</div>
          <div className="flex-1 pl-1">标准编号</div>
        </div>
        <ul>
          {STANDARDS.map((s, i) => (
            <li key={s} className="flex h-5 items-center pl-[7px]">
              <Expander open={false} />
              <Folder custom={i === STANDARDS.length - 1} />
              <span className="ml-[6px]">{s}</span>
            </li>
          ))}
        </ul>
      </div>
    </div>
  );
}

const INPUT = 'h-6 border border-[#a3a3a3] bg-[#efefef]';
const LABEL = 'w-[61px] pb-0.5';

function StandardForm() {
  return (
    <div className="flex flex-1 flex-col border border-[#b8b8b8] bg-[#efefef] px-px pb-px pt-[3px] text-[#999]">
      <div className="flex h-[25px] shrink-0 text-[#c3c3c3]">
        <button disabled className="w-[71px] border-x border-t border-[#e6e6e6] bg-[#f3f3f3]">标准属性</button>
        <button disabled className="ml-px w-[68px] bg-[#e7e7e9]">引用代码</button>
        <button disabled className="ml-px w-[81px] bg-[#e7e7e9]">自定义属性</button>
      </div>
      <fieldset disabled className="min-w-0 flex-1 border border-[#e6e6e6] bg-[#f3f3f3] pl-[13px] pt-[11px]">
        <div className="flex items-center">
          <label htmlFor="std-cn" className={LABEL}>中文名</label>
          <input id="std-cn" className={`${INPUT} w-[275px]`} />
          <span className="ml-[15px] flex items-center gap-1 pb-0.5">
            <CheckBox id="std-custom" disabled />
            <label htmlFor="std-custom">自定义</label>
          </span>
        </div>
        <hr className="ml-[6px] mt-[9px] border-[#b8b8b8]" />
        <div className="pr-[18px]">
          <div className="mt-[11px] flex items-center">
            <label htmlFor="std-en" className="w-[61px]">英文名称</label>
            <input id="std-en" className={`${INPUT} flex-1`} />
          </div>
          <div className="mt-3 flex items-center">
            <label htmlFor="std-abbr" className="w-[119px]">英文缩写 (字段名称)</label>
            <input id="std-abbr" className={`${INPUT} flex-1`} />
          </div>
          <div className="mt-[13px] flex items-center">
            <label htmlFor="std-code" className={LABEL}>标准编号</label>
            <input id="std-code" className={`${INPUT} w-[252px]`} />
          </div>
          <div className="mt-3 flex">
            <label htmlFor="std-def" className="w-[61px]">业务定义</label>
            <div className="flex h-[109px] flex-1 border border-[#a3a3a3] bg-[#efefef]">
              <textarea id="std-def" className="flex-1 resize-none" />
              <div className="flex w-[17px] flex-col items-center justify-between bg-[#eaeaea] py-1">
                <Chevron dir="up" color="#c4c4c4" />
                <Chevron dir="down" color="#c4c4c4" />
              </div>
            </div>
          </div>
          <div className="mt-3 flex items-center">
            <label htmlFor="std-type" className="w-[61px] pl-[3px]">数据类型</label>
            <div className="relative h-6 w-[291px]">
              <select id="std-type" className={`${INPUT} w-full appearance-none opacity-100`} />
              <span className="pointer-events-none absolute right-px top-px flex h-[22px] w-4 items-center justify-center border-l border-[#c4c4c4]">
                <Triangle color="#c4c4c4" />
              </span>
            </div>
          </div>
          <div className="mt-[13px] flex items-center">
            <label htmlFor="std-len" className={`${LABEL} pl-[26px]`}>长度</label>
            <input id="std-len" className={`${INPUT} w-[121px]`} />
            <label htmlFor="std-prec" className="ml-[18px] w-[31px] pb-0.5">精度</label>
            <input id="std-prec" className={`${INPUT} w-[121px]`} />
            <span className="ml-[13px] flex items-center gap-1 pb-0.5">
              <CheckBox id="std-null" disabled />
              <label htmlFor="std-null">非空</label>
            </span>
          </div>
        </div>
      </fieldset>
    </div>
  );
}

const RADIO =
  'size-[13px] appearance-none rounded-full border border-[#a8a8a8] bg-white checked:bg-[#4f78d0] checked:shadow-[inset_0_0_0_2px_#fff]';

function BrowserWindow() {
  return (
    <section className="absolute left-[94px] top-[180px] flex h-[643px] w-[726px] flex-col border border-[#d3d9e3] bg-[#f7f7f7] shadow-[2px_2px_4px_rgba(0,0,0,0.3)]">
      <div className="flex h-[30px] shrink-0 items-center justify-between border-b border-[#d3d9e3] bg-[#475c95] pl-[10px] text-white">
        <h2 className="pb-0.5 text-[15px]">数据标准浏览器</h2>
        <WindowButtons color="#fff" />
      </div>
      <div className="flex items-center pl-[13px] pr-[10px] pt-2">
        <button className="flex h-6 w-[69px] items-center justify-center gap-[3px] border border-[#a3a3a3] bg-[#efefef] pr-0.5">
          <Svg w={16} h={14}>
            <path d="M3 6Q4 2 8 2q3 0 4.500 3M13 8q-1 4-5 4-3 0-4.500-3" stroke={BLUE} strokeWidth="2.200" />
            <path d="M9.500 5H16l-3 4zM0 9h6.500L3.500 5z" fill={BLUE} />
          </Svg>
          下载
        </button>
        <button aria-label="下载选项" className="-ml-px flex h-6 w-[17px] items-center justify-center border border-[#a3a3a3] bg-[#efefef]">
          <Triangle />
        </button>
        <button className="ml-[3px] h-6 w-[85px] border border-[#c4c4c4] bg-white p-px">
          <span className="flex h-full items-center justify-center gap-[3px] border border-dotted border-black pr-0.5">
            <GlobeUp />
            上传私有
          </span>
        </button>
        <button className="ml-auto flex h-6 w-[85px] items-center justify-center gap-[3px] border border-[#c4c4c4] bg-white pr-0.5">
          <GlobeUp />
          全部发布
        </button>
        <button className="ml-[6px] flex h-6 w-[139px] items-center justify-center gap-[3px] border border-[#c4c4c4] bg-white pr-0.5">
          <GlobeUp />
          发布所选目录/标准
        </button>
      </div>
      <div className="flex min-h-0 flex-1 px-[10px] pt-3">
        <StandardList />
        <div className="flex w-3 items-center justify-center pb-1">
          <Svg w={2} h={14}>
            <path d="M0 0h2v2H0zM0 4h2v2H0zM0 8h2v2H0zM0 12h2v2H0z" fill="#555" />
          </Svg>
        </div>
        <StandardForm />
      </div>
      <div className="flex h-[46px] shrink-0 items-start justify-end pr-3 pt-[6px]">
        <div className="flex h-[26px] items-center gap-1">
          <input type="radio" name="apply" id="apply-map" className={RADIO} />
          <label htmlFor="apply-map">仅建立映射</label>
          <input type="radio" name="apply" id="apply-sync" defaultChecked className={`${RADIO} ml-1`} />
          <label htmlFor="apply-sync">映射时同步属性</label>
        </div>
        <button className="ml-4 h-7 w-[75px] border border-[#c4c4c4] bg-white">应用到字段</button>
        <button className="ml-[6px] h-7 w-[75px] border border-[#c4c4c4] bg-white">关闭</button>
      </div>
      <Grip />
    </section>
  );
}

// ─── Page ─────────────────────────────────────────────────────────────────────

export default function App() {
  return (
    <div className="relative flex h-screen flex-col overflow-hidden bg-[#efefef] font-['Noto_Sans','Noto_Sans_CJK_SC',sans-serif] text-[12px] leading-4 text-[#3b3b3b]">
      <TitleBar />
      <Ribbon />
      <div className="flex min-h-0 flex-1">
        <aside className="flex w-[267px] shrink-0 flex-col pl-px pr-0.5 pt-0.5">
          <ModelPanel />
          <NavPanel />
        </aside>
        <DocumentArea />
      </div>
      <EditorWindow />
      <BrowserWindow />

      {/* Callout: the standard cell opens the browser window */}
      <div className="pointer-events-none absolute left-[1142px] top-[295px] h-[37px] w-[134px] rounded-[3px] border-3 border-[#ff2414]" />
      <svg
        width="300"
        height="24"
        viewBox="0 0 300 24"
        className="pointer-events-none absolute left-[825px] top-[292px]"
        aria-hidden="true"
      >
        <path d="M0 8L13 2l-3 4 130 6 159 7-159-4L10 11l3 4z" fill="#ff2414" />
      </svg>
    </div>
  );
}
